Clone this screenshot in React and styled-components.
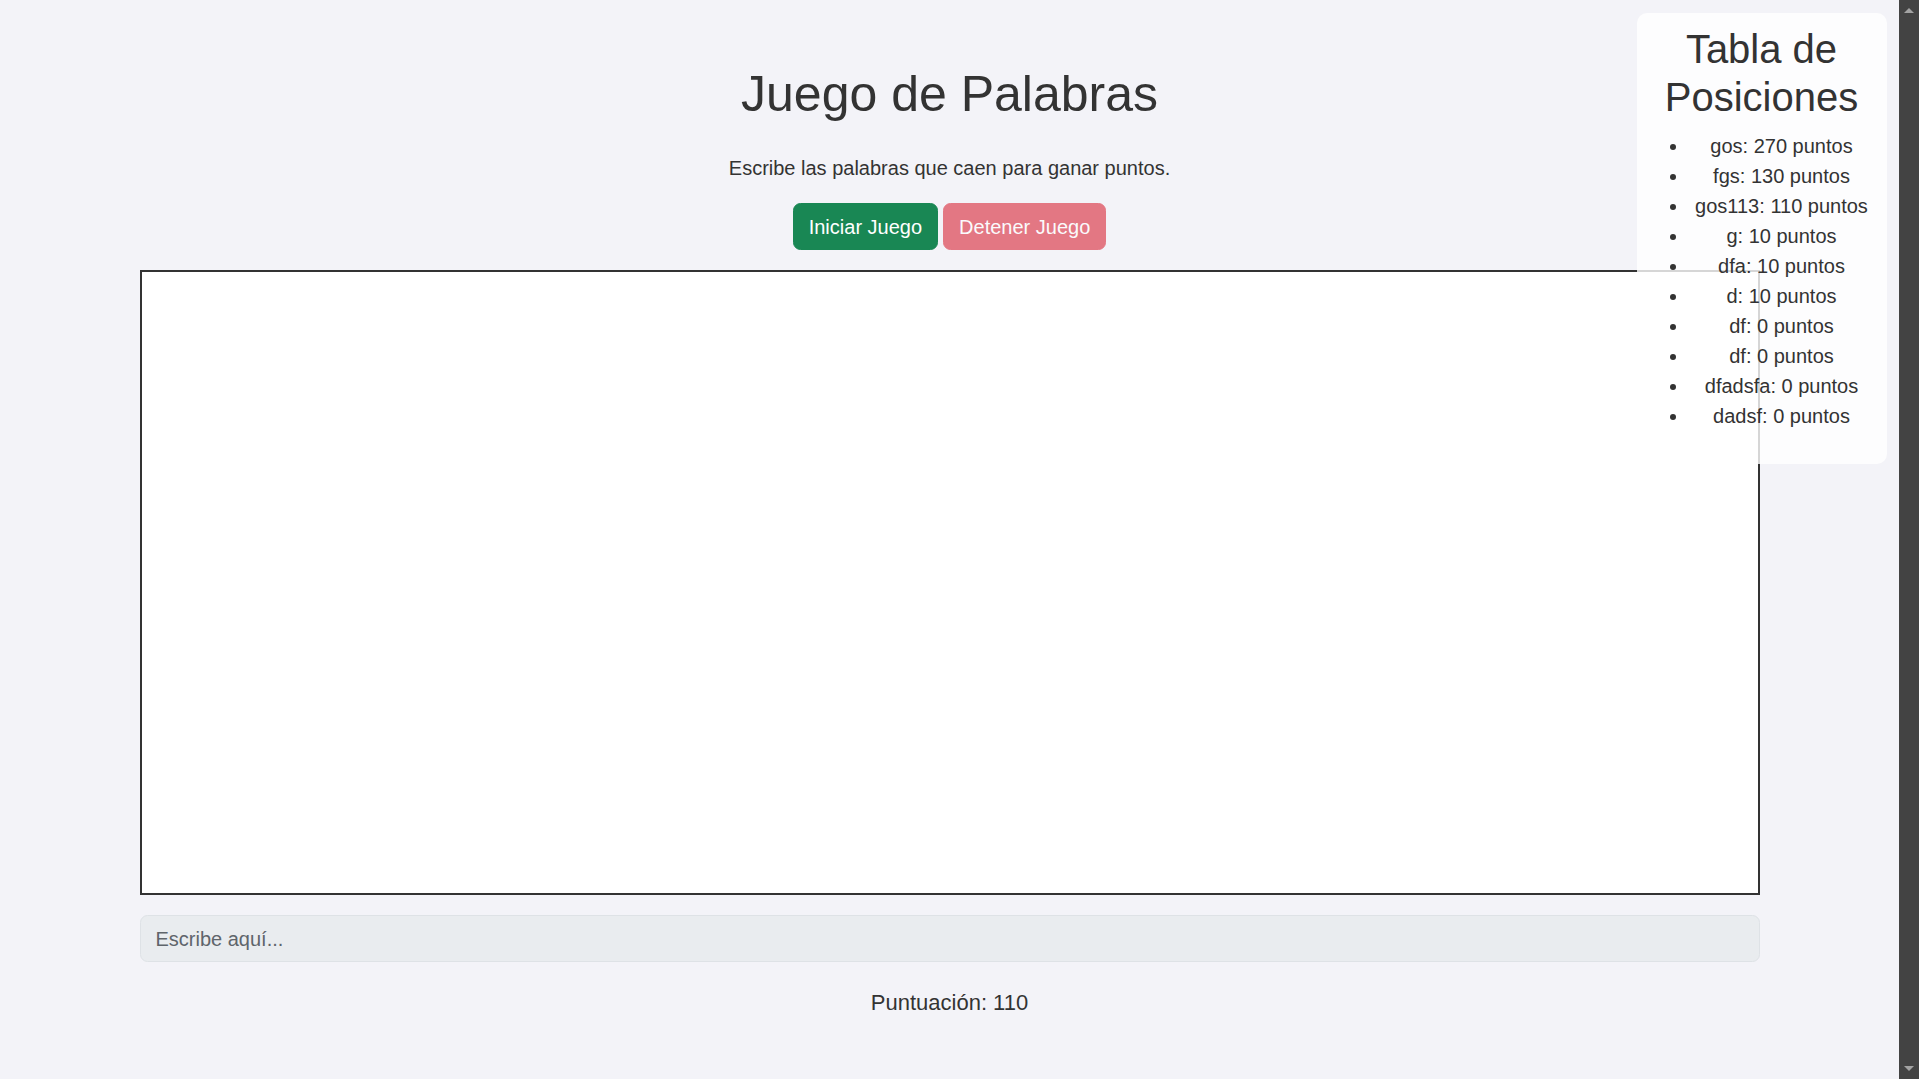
import React from 'react';
import styled, { createGlobalStyle } from 'styled-components';

const GlobalStyle = createGlobalStyle`
  body {
    margin: 0;
    background: #f3f3f8;
    color: #333;
    font-family: "Liberation Sans", Arial, sans-serif;
    overflow: hidden;
  }
  * {
    box-sizing: border-box;
  }
`;

const Viewport = styled.div`
  display: flex;
  height: 100vh;
`;

const Main = styled.main`
  position: relative;
  flex: 1;
  overflow-y: auto;
  scrollbar-width: none;
  &::-webkit-scrollbar {
    display: none;
  }
`;

const ScrollRail = styled.div`
  display: flex;
  flex-direction: column;
  justify-content: space-between;
  align-items: center;
  width: 20px;
  padding: 8px 0;
  background: #434343;
`;

const Arrow = styled.div`
  width: 0;
  height: 0;
  border-left: 5px solid transparent;
  border-right: 5px solid transparent;
  border-${(props) => (props.up ? 'bottom' : 'top')}: 5px solid #a3a3a3;
`;

const Page = styled.div`
  padding: 64px 0 70px;
  text-align: center;
`;

const Container = styled.div`
  width: 1650px;
  max-width: 100%;
  margin: 0 auto;
  padding: 0 15px;
`;

const Title = styled.h1`
  margin: 0 0 29px;
  font-size: 50px;
  font-weight: 400;
  line-height: 60px;
  color: #333;
`;

const Subtitle = styled.p`
  margin: 0 0 20px;
  font-size: 20px;
  line-height: 30px;
`;

const ButtonRow = styled.div`
  display: flex;
  justify-content: center;
  gap: 5px;
  margin-bottom: 20px;
`;

const Button = styled.button`
  padding: 7.5px 15px;
  font-family: inherit;
  font-size: 20px;
  line-height: 30px;
  color: #fff;
  background: ${(props) => props.bg};
  border: 1px solid ${(props) => props.bg};
  border-radius: 7.5px;
  opacity: ${(props) => (props.disabled ? 0.65 : 1)};
  cursor: pointer;
`;

const GameCanvas = styled.canvas`
  display: block;
  width: 100%;
  height: 625px;
  background: #fff;
  border: 2px solid #333;
`;

const WordInput = styled.input`
  display: block;
  width: 100%;
  margin-top: 20px;
  padding: 7.5px 15px;
  font-family: inherit;
  font-size: 20px;
  line-height: 30px;
  background: #e9ecef;
  border: 1px solid #dee2e6;
  border-radius: 7.5px;
  color: #212529;

  &::placeholder {
    color: #5f656b;
  }
`;

const Score = styled.div`
  margin-top: 24px;
  font-size: 22px;
  line-height: 33px;
`;

const Leaderboard = styled.div`
  position: absolute;
  top: 12.5px;
  right: 12.5px;
  width: 250px;
  padding: 12.5px;
  background: rgba(255, 255, 255, 0.8);
  border-radius: 10px;
  text-align: center;
  z-index: 10;
`;

const BoardTitle = styled.h2`
  margin: 0 0 10px;
  font-size: 40px;
  font-weight: 400;
  line-height: 48px;
`;

const BoardList = styled.ul`
  margin: 0 0 20px;
  padding-left: 40px;
  font-size: 20px;
  line-height: 30px;
`;

const leaders = [
  ['gos', 270],
  ['fgs', 130],
  ['gos113', 110],
  ['g', 10],
  ['dfa', 10],
  ['d', 10],
  ['df', 0],
  ['df', 0],
  ['dfadsfa', 0],
  ['dadsf', 0],
];

export default function App() {
  return (
    <>
      <GlobalStyle />
      <Viewport>
        <Main>
          <Page>
            <Container>
              <Title>Juego de Palabras</Title>
              <Subtitle>Escribe las palabras que caen para ganar puntos.</Subtitle>
              <ButtonRow>
                <Button bg="#198754">Iniciar Juego</Button>
                <Button bg="#dc3545" disabled>Detener Juego</Button>
              </ButtonRow>
              <GameCanvas width={1616} height={621} />
              <WordInput placeholder="Escribe aquí..." disabled />
              <Score>Puntuación: 110</Score>
            </Container>
          </Page>
          <Leaderboard>
            <BoardTitle>Tabla de Posiciones</BoardTitle>
            <BoardList>
              {leaders.map(([name, pts], i) => (
                <li key={i}>{name}: {pts} puntos</li>
              ))}
            </BoardList>
          </Leaderboard>
        </Main>
        <ScrollRail>
          <Arrow up />
          <Arrow />
        </ScrollRail>
      </Viewport>
    </>
  );
}
